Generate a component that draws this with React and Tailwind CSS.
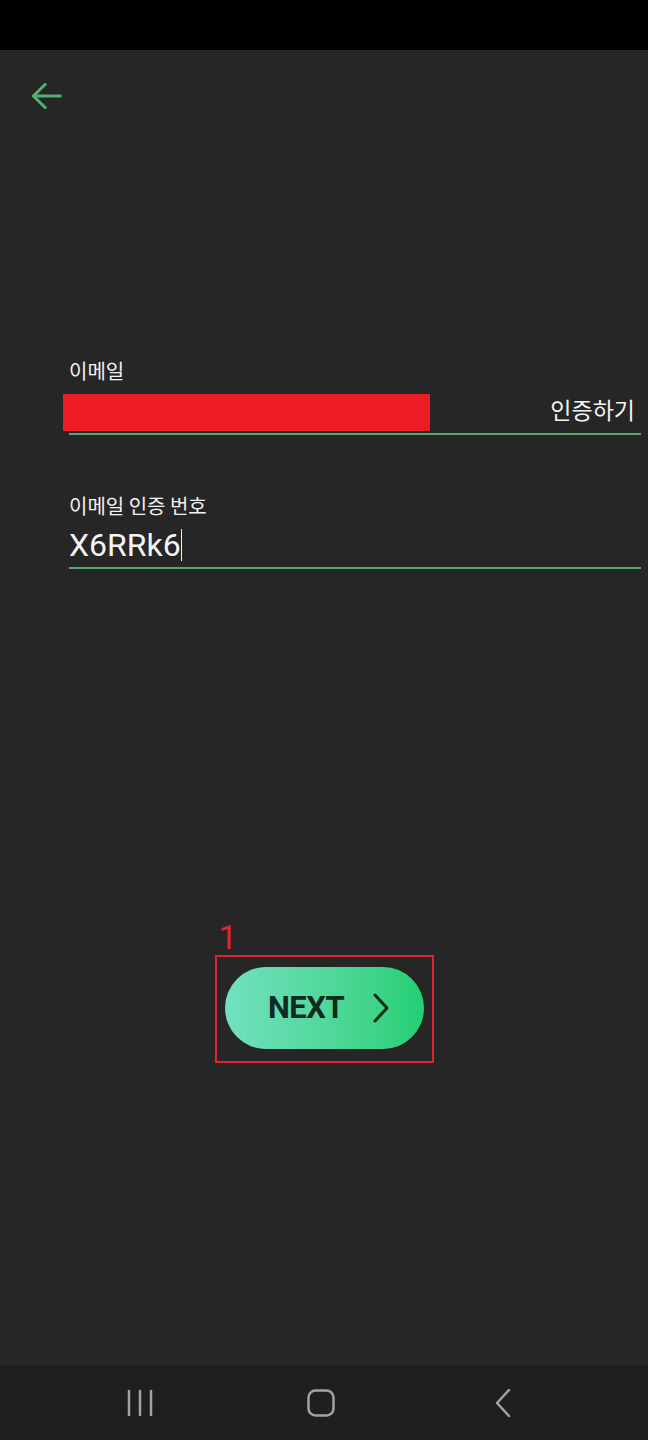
export default function App() {
  return (
    <div className="w-[648px] h-[1440px] flex flex-col bg-[#262626]" style={{ fontFamily: '"Noto Sans CJK KR", "Noto Sans", sans-serif' }}>
      {/* status bar */}
      <div className="h-[50px] bg-black shrink-0" />

      <div className="flex-1 flex flex-col">
        {/* back arrow */}
        <div className="pl-[31px] pt-[32px]">
          <svg width="32" height="28" viewBox="0 0 32 28" fill="none" stroke="#4fb06f" strokeWidth="3" strokeLinecap="square">
            <path d="M3 14H29" />
            <path d="M14 2.5L2.5 14L14 25.5" />
          </svg>
        </div>

        {/* form */}
        <div className="mt-[248px] pl-[69px] pr-[7px]">
          <div className="text-[20px] leading-[26px] text-[#f2f2f2]">이메일</div>
          <div className="mt-[10px] h-[41px] flex items-start justify-between border-b-2 border-[#52a774]">
            <div className="-ml-[6px] w-[367px] h-[37px] bg-[#ed1c24]" />
            <div className="text-[23px] leading-[30px] text-[#f2f2f2] pr-[6px]">인증하기</div>
          </div>

          <div className="mt-[58px] text-[20px] leading-[26px] text-[#f2f2f2]">이메일 인증 번호</div>
          <div className="mt-[4px] h-[46px] flex items-center border-b-2 border-[#52a774]">
            <span className="text-[32px] leading-[38px] text-[#f4f4f4]" style={{ fontFamily: 'Roboto, "Noto Sans", sans-serif' }}>X6RRk6</span>
            <span className="w-px h-[32px] bg-[#f0f0f0]" />
          </div>
        </div>

        {/* next button */}
        <div className="mt-[351px] flex justify-center">
          <div className="flex flex-col items-start">
            <div className="ml-[4px] text-[33px] leading-[36px] text-[#e8232b]" style={{ fontFamily: 'Roboto, sans-serif' }}>1</div>
            <div className="mt-[-1px] w-[219px] h-[108px] border-2 border-[#e0242b] pt-[10px] pl-[8px]">
              <button className="w-[199px] h-[82px] rounded-full bg-gradient-to-r from-[#72e0c0] to-[#22cf74] flex items-center justify-center gap-[28px] pl-[10px]">
                <span className="text-[31px] font-bold text-[#0f2a1f] tracking-[-0.5px]" style={{ fontFamily: 'Roboto, "Noto Sans", sans-serif' }}>NEXT</span>
                <svg width="18" height="32" viewBox="0 0 18 32" fill="none" stroke="#0f2a1f" strokeWidth="3" strokeLinecap="round" strokeLinejoin="round">
                  <path d="M3 3L15 16L3 29" />
                </svg>
              </button>
            </div>
          </div>
        </div>
      </div>

      {/* navigation bar */}
      <div className="h-[75px] bg-[#1f1f1f] shrink-0 flex items-center gap-[151px] pl-[125px]">
        <svg width="30" height="30" viewBox="0 0 30 30" fill="none" stroke="#a3a3a3" strokeWidth="2.5" strokeLinecap="round">
          <path d="M4 3V27M15 3V27M26 3V27" />
        </svg>
        <svg width="30" height="30" viewBox="0 0 30 30" fill="none" stroke="#a3a3a3" strokeWidth="2.5">
          <rect x="2.5" y="2.5" width="25" height="25" rx="7" />
        </svg>
        <svg width="30" height="30" viewBox="0 0 30 30" fill="none" stroke="#a3a3a3" strokeWidth="2.5" strokeLinecap="round" strokeLinejoin="round">
          <path d="M22 2L10 15L22 28" />
        </svg>
      </div>
    </div>
  );
}
